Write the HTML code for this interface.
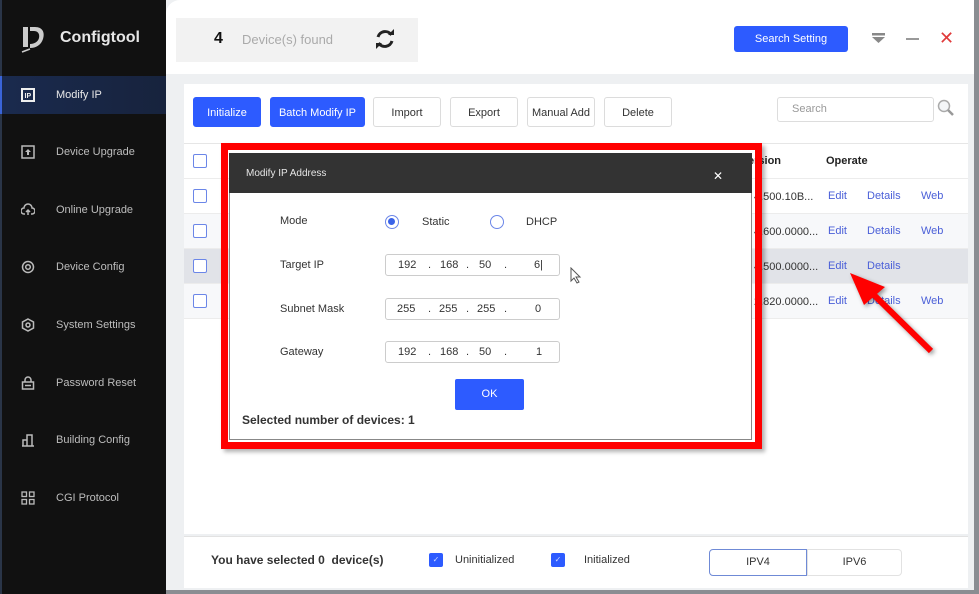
<!DOCTYPE html>
<html><head><meta charset="utf-8"><style>
*{margin:0;padding:0;box-sizing:border-box}
body{width:979px;height:594px;overflow:hidden;background:#8a8d92;font-family:"Liberation Sans",sans-serif;position:relative}
.a{position:absolute}
.side{left:0;top:0;width:166px;height:594px;background:#111}
.nav{left:0;width:166px;height:38px;color:#bdbdbd;font-size:11px;line-height:38px;padding-left:56px}
.ico{position:absolute;left:21px;top:12px;width:14px;height:14px}
.btn{top:97px;height:30px;border-radius:3px;font-size:11px;line-height:30px;text-align:center;color:#333;background:#fff;border:1px solid #dcdcdc}
.blue{background:#2d5bff;color:#fff;border-color:#2d5bff}
.cb{width:14px;height:14px;border:1.5px solid #6b86e8;border-radius:2px;background:#fff}
.row{left:184px;width:784px;height:35px;border-bottom:1px solid #ececec}
.lnk{color:#4a5fd8;font-size:11px}
.ver{left:754px;font-size:11px;color:#333}
.lab{left:280px;font-size:11px;color:#333}
.ip{left:385px;width:175px;height:22px;border:1px solid #ccc;border-radius:3px;font-size:11px;color:#333}
.ip span{position:absolute;top:4px}
</style></head><body>
<div class="a" style="left:0;top:0;width:979px;height:594px;background:#eef0f2"></div>
<div class="a side"></div>
<div class="a" style="left:0;top:0;width:2px;height:594px;background:#2a3548"></div>
<svg class="a" style="left:20px;top:24px" width="30" height="30" viewBox="0 0 30 30"><path d="M3 3h5v20H3zM10 3h5c8 0 10 6 8 12-2 6-7 9-13 9v-4c4 0 8-2 9-6 1-5-2-7-5-7h-4z" fill="#ccc"/><path d="M2 28l8-3" stroke="#ccc" stroke-width="1.5"/></svg>
<div class="a" style="left:60px;top:29px;color:#e6e6e6;font-size:16px;font-weight:bold">Configtool</div>
<div class="a" style="left:0;top:76px;width:166px;height:38px;background:linear-gradient(90deg,#1a2a4e,#17233d);border-left:2px solid #3a64d8"></div>
<div class="a nav" style="top:76px;color:#e8e8e8"><svg class="ico" viewBox="0 0 14 14"><rect x="1" y="1" width="12" height="12" fill="none" stroke="#eee" stroke-width="2"/><text x="3.5" y="10" font-size="7" fill="#eee" font-family="Liberation Sans" font-weight="bold">IP</text></svg>Modify IP</div>
<div class="a nav" style="top:133px"><svg class="ico" viewBox="0 0 14 14"><rect x="1" y="1" width="12" height="12" fill="none" stroke="#bbb" stroke-width="1.5"/><path d="M7 4l3 3H8v3H6V7H4z" fill="#bbb"/></svg>Device Upgrade</div>
<div class="a nav" style="top:191px"><svg class="ico" viewBox="0 0 14 14"><path d="M4 11H3a3 3 0 010-6 4 4 0 018 0 3 3 0 010 6h-1" fill="none" stroke="#bbb" stroke-width="1.5"/><path d="M7 12V7M5 9l2-2 2 2" stroke="#bbb" fill="none" stroke-width="1.5"/></svg>Online Upgrade</div>
<div class="a nav" style="top:248px"><svg class="ico" viewBox="0 0 14 14"><circle cx="7" cy="7" r="5.5" fill="none" stroke="#bbb" stroke-width="1.5"/><circle cx="7" cy="7" r="2.3" fill="none" stroke="#bbb" stroke-width="1.5"/></svg>Device Config</div>
<div class="a nav" style="top:306px"><svg class="ico" viewBox="0 0 14 14"><path d="M7 1l5.5 3v6L7 13 1.5 10V4z" fill="none" stroke="#bbb" stroke-width="1.5"/><circle cx="7" cy="7" r="2" fill="none" stroke="#bbb" stroke-width="1.5"/></svg>System Settings</div>
<div class="a nav" style="top:364px"><svg class="ico" viewBox="0 0 14 14"><rect x="1.5" y="6" width="11" height="7" fill="none" stroke="#bbb" stroke-width="1.5"/><path d="M4 6V4a3 3 0 016 0v2M4 9.5h6" fill="none" stroke="#bbb" stroke-width="1.5"/></svg>Password Reset</div>
<div class="a nav" style="top:421px"><svg class="ico" viewBox="0 0 14 14"><path d="M1 13h12M2 13V7h4v6M6 13V2h5v11" fill="none" stroke="#bbb" stroke-width="1.5"/></svg>Building Config</div>
<div class="a nav" style="top:479px"><svg class="ico" viewBox="0 0 14 14"><g fill="none" stroke="#bbb" stroke-width="1.3"><rect x="1" y="1" width="4.5" height="4.5"/><rect x="8.5" y="1" width="4.5" height="4.5"/><rect x="1" y="8.5" width="4.5" height="4.5"/><rect x="8.5" y="8.5" width="4.5" height="4.5"/></g></svg>CGI Protocol</div>
<div class="a" style="left:166px;top:0;width:813px;height:74px;background:#fff;border-top-left-radius:14px"></div>
<div class="a" style="left:176px;top:18px;width:242px;height:44px;background:#f2f2f2"></div>
<div class="a" style="left:214px;top:30px;font-size:16px;font-weight:bold;color:#111">4</div>
<div class="a" style="left:242px;top:32px;font-size:13px;color:#aaa">Device(s) found</div>
<svg class="a" style="left:374px;top:28px" width="22" height="22" viewBox="0 0 22 22"><path d="M4 9a7.5 7.5 0 0113.5-2" fill="none" stroke="#222" stroke-width="3"/><path d="M18 13a7.5 7.5 0 01-13.5 2" fill="none" stroke="#222" stroke-width="3"/><path d="M14 7h6V1z" fill="#222"/><path d="M8 15H2v6z" fill="#222"/></svg>
<div class="a blue" style="left:734px;top:26px;width:114px;height:26px;border-radius:3px;font-size:11px;line-height:26px;text-align:center;color:#fff;background:#2d5bff">Search Setting</div>
<svg class="a" style="left:871px;top:32px" width="16" height="14"><rect x="1" y="1" width="13" height="2.5" fill="#888"/><path d="M1 5h13l-6.5 6z" fill="#888"/></svg>
<div class="a" style="left:906px;top:38px;width:13px;height:2px;background:#999"></div>
<div class="a" style="left:939px;top:28px;color:#e03a3a;font-size:18px">✕</div>
<div class="a" style="left:184px;top:84px;width:784px;height:450px;background:#fff"></div>
<div class="a btn blue" style="left:193px;width:68px">Initialize</div>
<div class="a btn blue" style="left:270px;width:95px">Batch Modify IP</div>
<div class="a btn" style="left:373px;width:68px">Import</div>
<div class="a btn" style="left:450px;width:68px">Export</div>
<div class="a btn" style="left:527px;width:68px">Manual Add</div>
<div class="a btn" style="left:604px;width:68px">Delete</div>
<div class="a" style="left:777px;top:97px;width:157px;height:25px;border:1px solid #ddd;border-radius:3px;font-size:11px;color:#999;line-height:23px;padding-left:14px">Search</div>
<svg class="a" style="left:937px;top:99px" width="18" height="18"><circle cx="7" cy="7" r="5.5" fill="#f4f6f8" stroke="#aaa" stroke-width="1.5"/><path d="M11 11l5 5" stroke="#999" stroke-width="2.5"/></svg>
<div class="a" style="left:184px;top:143px;width:784px;height:1px;background:#e6e6e6"></div>
<div class="a row" style="top:144px"></div>
<div class="a row" style="top:179px"></div>
<div class="a row" style="top:214px;background:#f7f8fa"></div>
<div class="a row" style="top:249px;background:#e1e3e8"></div>
<div class="a row" style="top:284px;background:#f7f8fa"></div>
<div class="a cb" style="left:193px;top:154px"></div>
<div class="a cb" style="left:193px;top:189px"></div>
<div class="a cb" style="left:193px;top:224px"></div>
<div class="a cb" style="left:193px;top:259px"></div>
<div class="a cb" style="left:193px;top:294px"></div>
<div class="a" style="left:748px;top:155px;font-size:11px;font-weight:bold;color:#222">ersion</div>
<div class="a" style="left:826px;top:155px;font-size:11px;font-weight:bold;color:#222">Operate</div>
<div class="a ver" style="top:191px">4.500.10B...</div>
<div class="a ver" style="top:226px">4.600.0000...</div>
<div class="a ver" style="top:261px">4.500.0000...</div>
<div class="a ver" style="top:296px">2.820.0000...</div>
<div class="a lnk" style="left:828px;top:190px">Edit</div><div class="a lnk" style="left:867px;top:190px">Details</div><div class="a lnk" style="left:921px;top:190px">Web</div>
<div class="a lnk" style="left:828px;top:225px">Edit</div><div class="a lnk" style="left:867px;top:225px">Details</div><div class="a lnk" style="left:921px;top:225px">Web</div>
<div class="a lnk" style="left:828px;top:260px">Edit</div><div class="a lnk" style="left:867px;top:260px">Details</div>
<div class="a lnk" style="left:828px;top:295px">Edit</div><div class="a lnk" style="left:867px;top:295px">Details</div><div class="a lnk" style="left:921px;top:295px">Web</div>
<div class="a" style="left:184px;top:536px;width:784px;height:52px;background:#fff;border-top:1px solid #e2e2e2"></div>
<div class="a" style="left:211px;top:553px;font-size:12px;font-weight:bold;color:#333">You have selected 0&nbsp; device(s)</div>
<div class="a" style="left:429px;top:553px;width:14px;height:14px;background:#2d5bff;border-radius:2px;color:#cfd9ff;font-size:8px;text-align:center;line-height:14px">✓</div>
<div class="a" style="left:455px;top:554px;font-size:11px;color:#333">Uninitialized</div>
<div class="a" style="left:551px;top:553px;width:14px;height:14px;background:#2d5bff;border-radius:2px;color:#cfd9ff;font-size:8px;text-align:center;line-height:14px">✓</div>
<div class="a" style="left:584px;top:554px;font-size:11px;color:#333">Initialized</div>
<div class="a" style="left:709px;top:549px;width:98px;height:27px;border:1px solid #6f8ad6;border-radius:4px 0 0 4px;font-size:11px;text-align:center;line-height:25px;color:#333">IPV4</div>
<div class="a" style="left:807px;top:549px;width:95px;height:27px;border:1px solid #e2e2e2;border-radius:0 4px 4px 0;font-size:11px;text-align:center;line-height:25px;color:#333">IPV6</div>
<div class="a" style="left:974px;top:0;width:5px;height:594px;background:#8a8d92"></div>
<div class="a" style="left:166px;top:590px;width:813px;height:4px;background:#8a8d92"></div>
<div class="a" style="left:221px;top:143px;width:541px;height:306px;border:7px solid #f00;box-shadow:3px 3px 4px rgba(0,0,0,.3)"></div>
<div class="a" style="left:229px;top:153px;width:523px;height:287px;background:#fff;border:1px solid #888"></div>
<div class="a" style="left:229px;top:153px;width:523px;height:40px;background:#333"></div>
<div class="a" style="left:246px;top:168px;font-size:10px;color:#e6e6e6">Modify IP Address</div>
<div class="a" style="left:713px;top:169px;font-size:12px;color:#fff">✕</div>
<div class="a lab" style="top:215px">Mode</div>
<div class="a" style="left:385px;top:215px;width:14px;height:14px;border-radius:50%;border:1.5px solid #6b86e8"><div style="margin:2px;width:7px;height:7px;border-radius:50%;background:#3a63e8"></div></div>
<div class="a" style="left:422px;top:216px;font-size:11px;color:#333">Static</div>
<div class="a" style="left:490px;top:215px;width:14px;height:14px;border-radius:50%;border:1.5px solid #6b86e8"></div>
<div class="a" style="left:526px;top:216px;font-size:11px;color:#333">DHCP</div>
<div class="a lab" style="top:259px">Target IP</div>
<div class="a lab" style="top:303px">Subnet Mask</div>
<div class="a lab" style="top:346px">Gateway</div>
<div class="a ip" style="top:254px"><span style="left:12px">192</span><span style="left:42px">.</span><span style="left:54px">168</span><span style="left:80px">.</span><span style="left:93px">50</span><span style="left:118px">.</span><span style="left:148px">6|</span></div>
<div class="a ip" style="top:298px"><span style="left:11px">255</span><span style="left:42px">.</span><span style="left:53px">255</span><span style="left:80px">.</span><span style="left:91px">255</span><span style="left:118px">.</span><span style="left:149px">0</span></div>
<div class="a ip" style="top:341px"><span style="left:12px">192</span><span style="left:42px">.</span><span style="left:54px">168</span><span style="left:80px">.</span><span style="left:93px">50</span><span style="left:118px">.</span><span style="left:150px">1</span></div>
<svg class="a" style="left:570px;top:267px" width="14" height="18"><path d="M1 1v13l3-3 3 5 2-1-3-5h4z" fill="#fff" stroke="#555"/></svg>
<div class="a" style="left:455px;top:379px;width:69px;height:31px;background:#2d5bff;border-radius:2px;color:#fff;font-size:11px;text-align:center;line-height:31px">OK</div>
<div class="a" style="left:242px;top:413px;font-size:12px;font-weight:bold;color:#333">Selected number of devices: 1</div>
<svg class="a" style="left:840px;top:265px" width="110" height="100"><g style="filter:drop-shadow(2px 2px 2px rgba(0,0,0,.4))"><path d="M91 86L34 30" stroke="#f00" stroke-width="6"/><path d="M10 8l35 14-21 18z" fill="#f00"/></g></svg>
</body></html>
